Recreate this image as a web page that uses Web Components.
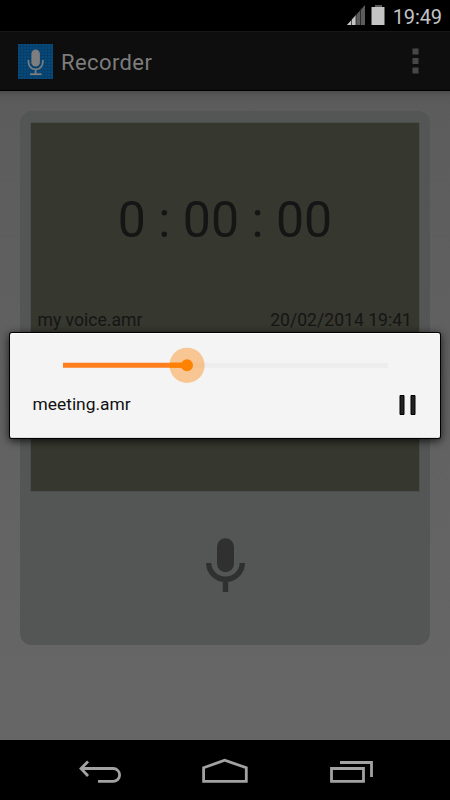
<!DOCTYPE html>
<html lang="en">
<head>
<meta charset="utf-8">
<title>Recorder</title>
<style>
html,body{margin:0;background:#000}
body{width:450px;height:800px;overflow:hidden;font-family:Roboto,"Noto Sans",sans-serif}
</style>
</head>
<body>
<recorder-screen>
  <status-bar slot="status">19:49</status-bar>
  <action-bar slot="header">Recorder</action-bar>
  <recorder-card>
    <lcd-display><span>0 : 00 : 00</span><span slot="name">my voice.amr</span><span slot="date">20/02/2014 19:41</span></lcd-display>
  </recorder-card>
  <player-dialog slot="dialog">meeting.amr</player-dialog>
  <nav-bar slot="nav"></nav-bar>
</recorder-screen>
<script>
function define(name, markup) {
  const template = document.createElement('template');
  template.innerHTML = markup;
  customElements.define(name, class extends HTMLElement {
    constructor() {
      super();
      this.attachShadow({ mode: 'open' }).append(template.content.cloneNode(true));
    }
  });
}

define('recorder-screen', `<style>
:host{display:grid;grid-template-rows:31px 60px 649px 60px;width:450px;height:800px;position:relative}
main{background:linear-gradient(#4c4c4c 0,#585858 5px,#5c5c5c 14px,#5f5f5f 180px,#666 600px);padding:20px 20px 0;box-sizing:border-box}
::slotted([slot=dialog]){position:absolute;left:10px;top:333px}
</style><slot name="status"></slot><slot name="header"></slot><main><slot></slot></main><slot name="nav"></slot><slot name="dialog"></slot>`);

define('status-bar', `<style>
:host{display:flex;justify-content:flex-end;align-items:flex-start;background:#000;color:#c4c4c4;font-size:20px;line-height:34px;padding-right:8px}
svg{display:block;margin-right:8px}
span{display:block;letter-spacing:-.1px}
</style><svg width="40" height="31"><path d="M2 25L20 5V25Z" fill="#5b5b5b"/><path d="M2 25L11 15V25Z" fill="#c4c4c4"/><path d="M6.5 18V25M11 12V25M15.5 8V25" stroke="#161616" stroke-width=".7"/><path d="M30 5h7v2h-7z" fill="#5b5b5b"/><path d="M26.5 7h13v18h-13z" fill="#c4c4c4"/></svg><span><slot></slot></span>`);

define('action-bar', `<style>
:host{display:flex;align-items:center;box-sizing:border-box;background:#0e0e0e;border-top:1px solid #171717;border-bottom:1px solid #000;padding:0 31px 0 18px;color:#7c7c7c;font-size:22px;line-height:28px}
.title{margin-left:8px;flex:1;letter-spacing:.4px;padding-top:3px}
svg{display:block}
</style><svg width="35" height="35"><defs><pattern id="p" width="3" height="3" patternUnits="userSpaceOnUse"><rect width="3" height="3" fill="#063f69"/><rect width="2" height="2" fill="#07497a"/></pattern></defs><rect width="35" height="35" fill="url(#p)"/><rect x="13.4" y="5.5" width="8.5" height="17" rx="4.25" fill="#7e7e7e"/><path d="M10.5 16v2.3a7.15 7.15 0 0 0 14.3 0V16M17.6 25.5v4.7" fill="none" stroke="#7e7e7e" stroke-width="1.7"/><path d="M12 30.2h11.5" stroke="#7e7e7e" stroke-width="1.8"/></svg><span class="title"><slot></slot></span><svg width="7" height="26"><path d="M.5 .5h6v6h-6zM.5 10h6v6h-6zM.5 19.5h6v6h-6z" fill="#474747"/></svg>`);

define('recorder-card', `<style>
:host{display:flex;flex-direction:column;align-items:center;box-sizing:border-box;height:534px;border-radius:12px;background:#535655;padding:12px 11px 0}
svg{display:block;margin-top:46px}
</style><slot></slot><svg width="40" height="56"><rect x="12" y="1.3" width="17" height="34" rx="8.5" fill="#303030"/><path d="M3.7 26a16.8 16.3 0 0 0 33.6 0M20.5 42v13" fill="none" stroke="#303030" stroke-width="5.4"/></svg>`);

define('lcd-display', `<style>
:host{display:flex;flex-direction:column;box-sizing:border-box;width:388px;height:368px;background:#36372e;box-shadow:0 0 1px #292a24;color:#151515}
.time{text-align:center;font-size:50px;line-height:60px;margin-top:67px;white-space:pre}
.meta{display:flex;justify-content:space-between;font-size:17.6px;line-height:24px;margin-top:58px;padding:0 7px 0 6.5px}
</style><div class="time"><slot></slot></div><div class="meta"><slot name="name"></slot><slot name="date"></slot></div>`);

define('player-dialog', `<style>
:host{display:flex;flex-direction:column;box-sizing:border-box;width:430px;height:105px;border-radius:2px;background:#f4f4f4;border-top:1px solid #fff;border-bottom:1px solid #ddd;box-shadow:0 0 0 1px #000,0 2px 8px 1px rgba(0,0,0,.75);color:#111}
svg{display:block}
.slider{margin:13px 0 0 53px}
.row{display:flex;justify-content:space-between;align-items:center;padding:0 24px 0 22.5px;margin-top:9px;font-size:17.4px;line-height:24px}
.row svg{margin-top:2px}
</style><svg class="slider" width="326" height="36"><path d="M0 15.7h325v5H0z" fill="#ededed"/><path d="M0 15.7h124v5H0z" fill="#ff7f1f"/><circle cx="124" cy="18.3" r="17.6" fill="#ff8300" fill-opacity=".4"/><path d="M107 15.7h17v5h-17z" fill="#ff8000"/><circle cx="124" cy="18.3" r="6" fill="#ff8300"/></svg><div class="row"><span><slot></slot></span><svg width="17" height="20"><path d="M1 .5h4v19H1zM12 .5h4v19h-4z" fill="#222" stroke="#000" stroke-width="1"/></svg></div>`);

define('nav-bar', `<style>
:host{display:flex;background:#000;align-items:center;justify-content:center}
svg{display:block}
</style><svg width="450" height="60" viewBox="0 5 450 60" fill="none" stroke="#a2a2a2" stroke-width="2.8"><path d="M81 33.5h32.2a6.4 6.4 0 0 1 0 12.8H98M88 26.5L81 33.5L88 41"/><path d="M203.6 32.7L224.7 25.3L246.3 32.7V46.3H203.6Z"/><path d="M331.5 33.5h32v12.8h-32zM340 27.5h31.5V42"/></svg>`);
</script>
</body>
</html>
